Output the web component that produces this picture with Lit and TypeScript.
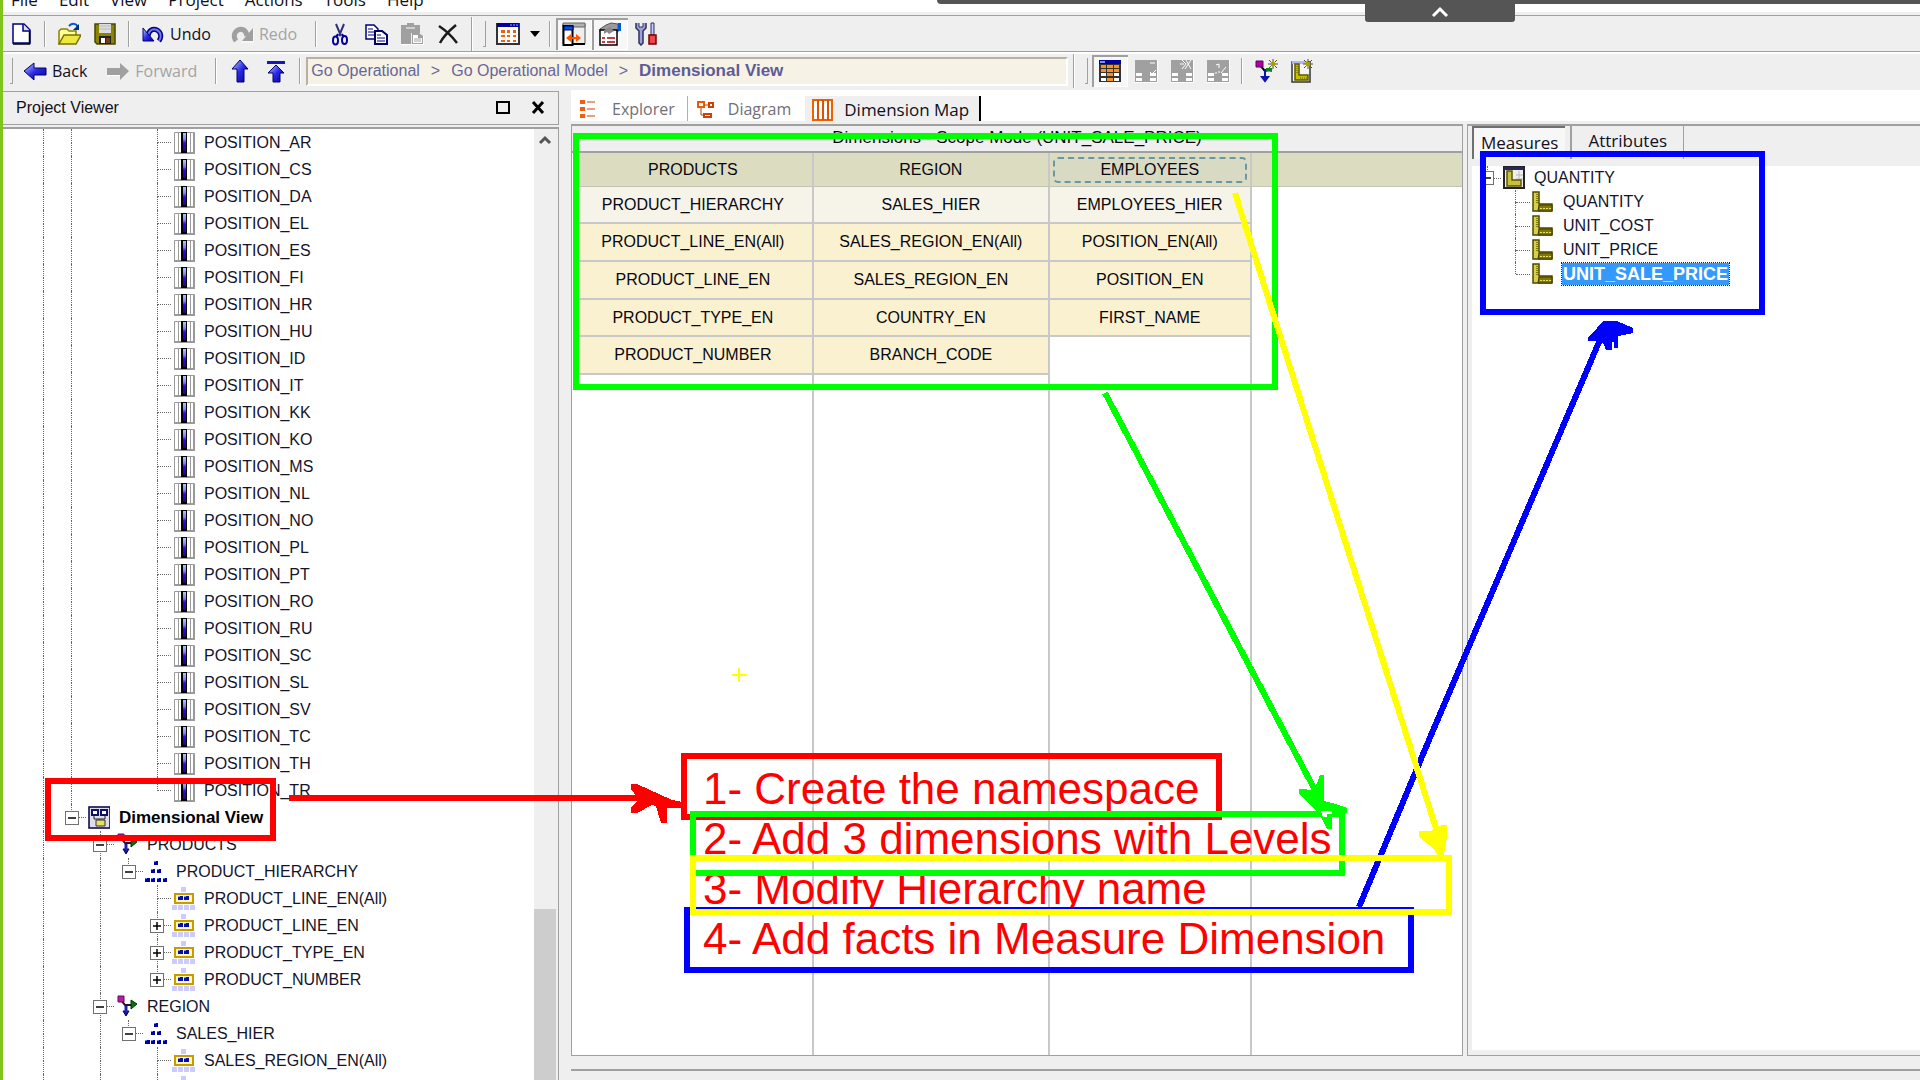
import { LitElement, html, css, svg, nothing } from "lit";
import type { SVGTemplateResult } from "lit";
import { customElement, property } from "lit/decorators.js";

/* ---------- icon set, each drawn on a 24 x 24 grid ---------- */
const grads = svg`<defs>
  <linearGradient id="b" x1="0" y1="0" x2="1" y2="1"><stop offset="0" stop-color="#c8d0ff"/><stop offset=".5" stop-color="#2a2ae8"/><stop offset="1" stop-color="#00008c"/></linearGradient>
  <linearGradient id="c" x1="0" y1="0" x2="0" y2="1"><stop offset="0" stop-color="#a0d0ff"/><stop offset=".35" stop-color="#8080f0"/><stop offset=".55" stop-color="#3300ff"/><stop offset="1" stop-color="#280080"/></linearGradient>
</defs>`;

const spark = (x: number, y: number) => svg`
  <path d="M${x - 5} ${y}h10M${x} ${y - 5}v10M${x - 4} ${y - 4}l8 8M${x + 4} ${y - 4}l-8 8" stroke="#55551a" stroke-width="1"/>
  <rect x=${x - 2} y=${y - 2} width="4" height="4" fill="#a8a000"/>`;

const greyGrid = svg`<path d="M1 1h22v22H1z" fill="#a0a0a0"/><path d="M2 14h6v3H2zM2 19h6v3H2zM16 14h6v3h-6zM16 19h6v3h-6z" fill="#fff"/><path d="M23.500 1v22.500H1" fill="none" stroke="#fff"/>`;

const icons: Record<string, SVGTemplateResult> = {
  fresh: svg`<path d="M4 2h11l6 6v13H4z" fill="#fff" stroke="#000080" stroke-width="1.500"/><path d="M20.500 9v13H4" fill="none" stroke="#000" stroke-width="1.500"/><path d="M14 2v7h7" fill="#dde" stroke="#000080" stroke-width="1.500"/>`,
  open: svg`<path d="M2 22V9l2-2h6l2 2h7v4" fill="#ffff99" stroke="#8a8400" stroke-width="1.500"/><path d="M2 22l5-9h17l-5 9z" fill="#f0e83c" stroke="#77700a" stroke-width="1.500"/><path d="M12 4c3-3 7-3 9 1" fill="none" stroke="#0058d0" stroke-width="2"/><path d="M22 2v6h-6z" fill="#003080"/>`,
  save: svg`<path d="M2 2h20v20H4l-2-2z" fill="#8a8400" stroke="#4a4600" stroke-width="1.500"/><path d="M6 2h12v9H6z" fill="#dcdcdc"/><path d="M6 4h12M6 7h12" stroke="#bbb"/><path d="M6 14h12v8H6z" fill="#222"/><path d="M8 16h4v5H8z" fill="#fff"/><path d="M13 16h4v5h-4z" fill="#70401c"/>`,
  undo: svg`<path d="M7 14c1-6 5-8 9-6 4 2 5 7 2 11" fill="none" stroke="#000080" stroke-width="5"/><path d="M7 14c1-6 5-8 9-6 4 2 5 7 2 11" fill="none" stroke="#7078f0" stroke-width="2"/><path d="M2 6v13h11z" fill="url(#b)" stroke="#000080"/>`,
  redo: svg`<path d="M17 14c-1-6-5-8-9-6-4 2-5 7-2 11" fill="none" stroke="#a0a0a0" stroke-width="5"/><path d="M23 6v13H12z" fill="#a0a0a0"/><path d="M12 20h12V7" fill="none" stroke="#fff"/>`,
  cut: svg`<path d="M8 2l5 12M16 2l-5 12" stroke="#30307c" stroke-width="2"/><path d="M10 12l-2 3M14 12l2 3" stroke="#0000a0" stroke-width="2"/><ellipse cx="7.500" cy="18.500" rx="2.500" ry="4" fill="none" stroke="#0000a0" stroke-width="2"/><ellipse cx="16.500" cy="18" rx="2.500" ry="4" fill="none" stroke="#0000a0" stroke-width="2"/>`,
  copy: svg`<path d="M2 3h8l4 4v10H2z" fill="#fff" stroke="#000080" stroke-width="1.500"/><path d="M4 7h5M4 10h7M4 13h7" stroke="#000080"/><path d="M11 9h7l5 4v9H11z" fill="#fff" stroke="#000060" stroke-width="2"/><path d="M13 13h4M13 16h8M13 19h8" stroke="#000080"/>`,
  paste: svg`<path d="M1 3h6V1h7v2h6v8h-9v11H1z" fill="#a0a0a0"/><path d="M6 6h9" stroke="#fff"/><path d="M12 11h7l4 3v8H12z" fill="#a0a0a0"/><path d="M13 13h5v3h4v5h-9z" fill="#fff"/><path d="M14 17h7M14 19h7" stroke="#a0a0a0"/><path d="M1 22.500h22.500V14" fill="none" stroke="#fff"/>`,
  del: svg`<path d="M3 4c6 4 12 9 18 17M20 3C14 8 8 13 4 21" stroke="#1c1c1c" stroke-width="2.500" fill="none"/>`,
  grid: svg`<path d="M1 2h22v20H1z" fill="#fff" stroke="#333" stroke-width="2"/><path d="M1 1h22v4H1z" fill="#0000a0"/><path d="M14 3h8" stroke="#9aaaff" stroke-dasharray="2 1"/><path d="M5 8h4v3H5zM11 8h3v3h-3zM17 8h3v3h-3zM5 13h4v2H5zM11 13h3v2h-3zM17 13h3v2h-3zM5 18h4v2H5zM11 18h3v2h-3zM17 18h3v2h-3z" fill="#f06010"/>`,
  pane: svg`<path d="M1 2h22v20H1z" fill="#eee" stroke="#555"/><path d="M1 1h22v4H1z" fill="#b0b0b0" stroke="#666"/><path d="M1.500 4v19h9V4z" fill="#fff" stroke="#000" stroke-width="2"/><path d="M2 4h9v4H2z" fill="#0050e0" stroke="#000060"/><path d="M11 22h12" stroke="#000" stroke-width="2"/><path d="M4 16l5-4v3h5v-3l5 4-5 4v-3H9v3z" fill="#f85800"/><path d="M10.500 9v4M10.500 19v4" stroke="#000"/>`,
  props: svg`<path d="M2 10V7l6-4 5-2 7 1v8l-4 1-3-3-5 3z" fill="#9a9a9a" stroke="#555"/><path d="M20 1h3v8h-3z" fill="#0058d8"/><path d="M2 8h17v15H2z" fill="#fff" stroke="#000" stroke-width="1.500"/><path d="M6 8l6-3 4 4-5 3-2-2-3 2z" fill="#888"/><path d="M4 16h3M9 16h8M4 20h3M9 20h8" stroke="#a80000" stroke-width="1.500"/>`,
  tools: svg`<path d="M2 1v5l3 3v12l2 2 2-2V9l3-3V1" fill="#9aa0d8" stroke="#30305c" stroke-width="1.500"/><path d="M5 1v4h4V1" fill="#efefef" stroke="#30305c"/><path d="M17 1h3v12h-3z" fill="#c0c8ff" stroke="#30305c"/><path d="M15 13h7v9h-7z" fill="#f04848" stroke="#780000" stroke-width="1.500"/>`,
  back: svg`<path d="M1 12l10-8v5h12v7H11v5z" fill="url(#b)" stroke="#00006c"/>`,
  forward: svg`<path d="M23 12L14 4v5H1v7h13v5z" fill="#a0a0a0"/><path d="M1 16.500h13" stroke="#fff"/>`,
  up: svg`<path d="M12 1l8 9h-4v13H9V10H4z" fill="url(#b)" stroke="#00006c"/>`,
  top: svg`<path d="M3 2h18v3H3z" fill="#1818b8"/><path d="M12 6l8 8h-4v9H9v-9H4z" fill="url(#b)" stroke="#00006c"/>`,
  map: svg`<path d="M1 1h22v22H1z" fill="#333"/><path d="M1 1h22v4H1z" fill="#0000a0"/><path d="M2 2h5v2H2z" fill="#8090ff"/><path d="M3 6h5v3H3zM9 6h6v3H9zM16 6h5v3h-5zM3 10h5v3H3zM9 10h6v3H9zM16 10h5v3h-5zM9 14h6v3H9zM9 19h6v3H9z" fill="#ff9020"/><path d="M3 14h5v3H3zM16 14h5v3h-5zM3 19h5v3H3zM16 19h5v3h-5z" fill="#fff"/>`,
  g1: svg`${greyGrid}<path d="M16 4h5M16 13l2 2 4-4" stroke="#fff" fill="none"/>`,
  g2: svg`${greyGrid}<path d="M12 1l4 4-4 5M16 1l5 9M21 1l-6 9M10 5h4" stroke="#fff" fill="none"/>`,
  g3: svg`${greyGrid}<path d="M10 6l3-1v4M20 8l-5 6M9 14h2M13 12v2" stroke="#fff" fill="none"/>`,
  newdim: svg`<path d="M5 5l6 7M11 12v8M11 12l7-2" stroke="#000" stroke-width="2"/><path d="M11 10v10M8 18h6l-3 4z" fill="#1010b0" stroke="#1010b0" stroke-width="2"/><path d="M2 2h7v6H2z" fill="#b000a0" stroke="#600060"/><path d="M12 9l6 0v4l-6-1z" fill="#108020"/>${spark(19, 5)}`,
  newmeas: svg`<path d="M2 3h18v20H2z" fill="#f4f4f4" stroke="#333" stroke-width="1.500"/><path d="M2 2h16v3H2z" fill="#b0b8f0"/><path d="M5 5h4v11h9v5H5z" fill="#c8c000" stroke="#5c5800" stroke-width="1.500"/><path d="M10 19h7M7 7v8" stroke="#5c5800" stroke-dasharray="1 1"/>${spark(18, 5)}`,
  col: svg`<path d="M3.500 1.500h20v21h-20z" fill="#fff" stroke="#9a9a9a"/><path d="M7.500 1v21M19.500 1v21M22.500 1v21" stroke="#9a9a9a"/><path d="M3 22h21" stroke="#9a9a9a" stroke-width="2"/><path d="M10 1h6v21h-6z" fill="#000"/><path d="M12 2h3v18h-3z" fill="url(#c)"/>`,
  view: svg`<path d="M3 1h21v21H3z" fill="#dde" stroke="#000040" stroke-width="1.500"/><path d="M6 4h6v5H6zM15 4h6v5h-6z" fill="#fff" stroke="#101060" stroke-width="2"/><path d="M8 10v3h11v-3M13 13v2" fill="none" stroke="#222"/><path d="M10 14h9v6h-9z" fill="#e8e060" stroke="#333"/>`,
  dim: svg`<path d="M6 4l6 7v9M12 10h6" stroke="#201030" stroke-width="2" fill="none"/><path d="M4 1h6v6H4z" fill="#b020a0" stroke="#700060"/><path d="M17 5l6 4-6 5z" fill="#087010" stroke="#003800"/><path d="M9 16h6l-3 5z" fill="#1818b0" stroke="#000070"/><path d="M12 11v6" stroke="#2020b0" stroke-width="3"/>`,
  hier: svg`<path d="M11 1h4v4h-4zM8 9h4v4H8zM14 9h4v4h-4zM2 18h5v4H2zM8 18h4v4H8zM14 18h4v4h-4zM20 18h4v4h-4z" fill="#0000a8"/><path d="M11 1h2v1h-2zM8 9h2v1H8zM14 9h2v1h-2zM2 18h2v1H2zM8 18h2v1H8zM14 18h2v1h-2zM20 18h2v1h-2z" fill="#6080ff"/>`,
  level: svg`<path d="M10 0h5v5h-5zM1 18h5v5H1zM7 18h5v5H7zM13 18h5v5h-5zM19 18h5v5h-5z" fill="#ccccfc"/><path d="M4 7h18v9H4z" fill="#fff8b8" stroke="#c89c00" stroke-width="2"/><path d="M7 9h5v4H7zM13 9h5v4h-5z" fill="#0010a8"/><path d="M7 9h2v1H7zM13 9h2v1h-2z" fill="#80a0ff"/>`,
  mfolder: svg`<path d="M3 1h20v21H3z" fill="#eee" stroke="#222" stroke-width="2"/><path d="M3 1h20v3H3z" fill="#28285c"/><path d="M15 9h7M15 13h7M18 5v12" stroke="#bbb"/><path d="M6 5h5v9h9v6H6z" fill="#c8c040" stroke="#5c5800" stroke-width="1.500"/>`,
  meas: svg`<path d="M3 2h6v12h13v7H3z" fill="#d8d048" stroke="#4c4800" stroke-width="1.500"/><path d="M9 15h13v6H8z" fill="#807800" stroke="#3c3800"/><path d="M10 18.500h11" stroke="#e8e060" stroke-dasharray="2 1"/><path d="M7 4v10" stroke="#807800" stroke-dasharray="1 1" stroke-width="2"/>`,
  explorer: svg`<path d="M3 3h5v4H3zM3 10h5v4H3zM3 17h5v4H3z" fill="#f06010"/><path d="M10 5h8M10 12h8M10 19h8" stroke="#d04000" stroke-width="1"/>`,
  diagram: svg`<path d="M3 5h6v5H3z" fill="#fff" stroke="#f05800" stroke-width="2"/><path d="M14 6h4v4h-4zM9 17h7v3H9z" fill="#fff" stroke="#d04000" stroke-width="2"/><path d="M9 8h5M6 11v7h3" fill="none" stroke="#c04000"/>`,
  dmap: svg`<path d="M2 2h19v20H2z" fill="#fff" stroke="#f06000" stroke-width="2"/><path d="M7 2v20M12 2v20M17 2v20" stroke="#e05000" stroke-width="2"/>`,
  square: svg`<path d="M6 6h12v11H6z" fill="none" stroke="#000" stroke-width="2"/>`,
  close: svg`<path d="M7 6l10 11M17 6L7 17" stroke="#000" stroke-width="3"/>`,
  chevron: svg`<path d="M7 14l5-5 5 5" fill="none" stroke="#555" stroke-width="3"/>`,
  chevronLight: svg`<path d="M5 16l7-7 7 7" fill="none" stroke="#fff" stroke-width="3"/>`,
  caret: svg`<path d="M7 9h10l-5 6z" fill="#000"/>`,
};

const icon = (name: string) => html`<svg class="icon" viewBox="0 0 24 24" width="24" height="24" aria-hidden="true">${grads}${icons[name]}</svg>`;

const iconCss = css`
  .icon { display: block; flex: none; width: 24px; height: 24px; }
`;

/* ---------- tree ---------- */
type Mark = "" | "v" | "t" | "l" | "+" | "-";
interface Row { guides: Mark[]; icon: string; label: string; bold?: boolean; selected?: boolean; ends?: boolean }

@customElement("tree-list")
export class TreeList extends LitElement {
  @property({ attribute: false }) rows: Row[] = [];

  static styles = [iconCss, css`
    :host { display: block; font: 16px/20px "Liberation Sans", Arial, sans-serif; color: #14142c; }
    .tree { list-style: none; margin: 0; padding: 0; }
    .row { display: flex; align-items: center; height: var(--row, 27px); }
    .cell { flex: none; align-self: stretch; width: 29px; display: grid; color: #777; }
    .cell:nth-child(odd) { width: 28px; }
    .cell > * { grid-area: 1 / 1; }
    .up, .down { justify-self: center; width: 0; border-left: 1px dotted #666; }
    .up { height: 50%; align-self: start; }
    .down { height: 50%; align-self: end; }
    .across { width: 50%; height: 0; align-self: center; justify-self: end; border-top: 1px dotted #666; }
    .knob { align-self: center; justify-self: center; box-sizing: border-box; width: 14px; height: 14px; padding: 0; border: 1px solid #707070; background: #fff; display: grid; place-items: center; }
    .knob svg { display: block; }
    .label { margin-left: 8px; white-space: nowrap; padding: 1px; }
    .bold { font-weight: bold; font-size: 17px; color: #000; }
    .selected { background: #3399ff; color: #fff; font-size: 18px; outline: 1px dotted #222; }
  `];

  private cell(m: Mark, below: boolean) {
    const up = m !== "";
    const down = m === "v" || m === "t" || ((m === "+" || m === "-") && below);
    return html`<span class="cell">
      ${up ? html`<span class="up"></span>` : nothing}
      ${down ? html`<span class="down"></span>` : nothing}
      ${up && m !== "v" ? html`<span class="across"></span>` : nothing}
      ${m === "+" || m === "-" ? html`<button class="knob" aria-label=${m === "+" ? "Expand" : "Collapse"}>
        <svg width="10" height="10" viewBox="0 0 10 10"><path d=${m === "+" ? "M1 5h8M5 1v8" : "M1 5h8"} stroke="#000" stroke-width="1.500"/></svg></button>` : nothing}
    </span>`;
  }

  render() {
    return html`<ul class="tree" role="tree">${this.rows.map(r => html`
      <li class="row" role="treeitem" aria-selected=${r.selected ? "true" : "false"}>
        ${r.guides.map(g => this.cell(g, !r.ends))}
        ${icon(r.icon)}
        <span class="label ${r.bold ? "bold" : ""} ${r.selected ? "selected" : ""}">${r.label}</span>
      </li>`)}</ul>`;
  }
}

const langs = "AR CS DA EL ES FI HR HU ID IT KK KO MS NL NO PL PT RO RU SC SL SV TC TH TR".split(" ");
const projectRows: Row[] = [
  ...langs.map((l, i): Row => ({ guides: ["v", "v", "", "", i === langs.length - 1 ? "l" : "t"], icon: "col", label: `POSITION_${l}` })),
  { guides: ["v", "-"], icon: "view", label: "Dimensional View", bold: true, ends: true },
  { guides: ["v", "", "-"], icon: "dim", label: "PRODUCTS" },
  { guides: ["v", "", "v", "-"], icon: "hier", label: "PRODUCT_HIERARCHY", ends: true },
  { guides: ["v", "", "v", "", "t"], icon: "level", label: "PRODUCT_LINE_EN(All)" },
  { guides: ["v", "", "v", "", "+"], icon: "level", label: "PRODUCT_LINE_EN" },
  { guides: ["v", "", "v", "", "+"], icon: "level", label: "PRODUCT_TYPE_EN" },
  { guides: ["v", "", "v", "", "+"], icon: "level", label: "PRODUCT_NUMBER", ends: true },
  { guides: ["v", "", "-"], icon: "dim", label: "REGION" },
  { guides: ["v", "", "v", "-"], icon: "hier", label: "SALES_HIER", ends: true },
  { guides: ["v", "", "v", "", "t"], icon: "level", label: "SALES_REGION_EN(All)" },
  { guides: ["v", "", "v", "", "+"], icon: "level", label: "" },
];
const measureRows: Row[] = [
  { guides: ["-"], icon: "mfolder", label: "QUANTITY", ends: true },
  { guides: ["", "t"], icon: "meas", label: "QUANTITY" },
  { guides: ["", "t"], icon: "meas", label: "UNIT_COST" },
  { guides: ["", "t"], icon: "meas", label: "UNIT_PRICE" },
  { guides: ["", "l"], icon: "meas", label: "UNIT_SALE_PRICE", bold: true, selected: true },
];

/* ---------- toolbars ---------- */
@customElement("tool-bars")
export class ToolBars extends LitElement {
  static styles = [iconCss, css`
    :host { display: block; font: 16px/20px "Open Sans", "Noto Sans", sans-serif; color: #101020; }
    .menu { display: flex; gap: 21px; height: 12px; padding-left: 8px; background: #fff; overflow: hidden; align-items: flex-end; font-size: 17px; }
    .menu a { color: inherit; text-decoration: none; line-height: 24px; }
    .bar { display: flex; align-items: center; height: 36px; background: #efefef; }
    .first { margin-top: 3px; border-top: 1px solid #a0a0a0; border-bottom: 1px solid #a0a0a0; height: 35px; }
    .second { border-top: 2px solid #fff; padding: 0 0 2px 2px; height: 34px; }
    .btn { display: flex; align-items: center; gap: 5px; border: 0; background: none; padding: 0 6px; height: 32px; font: inherit; color: inherit; flex: none; white-space: nowrap; box-sizing: border-box; }
    .wide { padding-right: 13px; }
    .off { color: #a4a4a4; }
    .slim { width: 18px; padding: 0; justify-content: center; overflow: hidden; }
    .down { box-shadow: inset 2px 2px 0 #a0a0a0, inset -1px -1px 0 #fff; background: #f7f7f7; }
    .sep, .handle { flex: none; width: 12px; height: 26px; display: flex; justify-content: center; }
    .sep::before { content: ""; width: 1px; background: #a0a0a0; border-right: 1px solid #fff; }
    .handle::before { content: ""; width: 2px; border-right: 1px solid #a0a0a0; border-bottom: 1px solid #a0a0a0; }
    .tall { height: 34px; }
    .crumbs { display: flex; gap: 11px; align-items: center; flex: 0 1 762px; box-sizing: border-box; height: 29px; padding-left: 3px; overflow: hidden; background: #f7f2e6; border: 2px solid #fff; border-top-color: #b8b0a0; border-left-color: #b8b0a0; font: 16px/20px "Liberation Sans", Arial, sans-serif; color: #66669c; }
    .crumbs a { color: inherit; text-decoration: none; white-space: nowrap; }
    .crumbs b { color: #5c5c98; font-size: 17px; }
  `];

  private btn(name: string, title: string, cls = "", text = "") {
    return html`<button class="btn ${cls}" aria-label=${title} ?disabled=${cls.includes("off")}>${icon(name)}${text ? html`<span>${text}</span>` : nothing}</button>`;
  }

  render() {
    const sep = html`<span class="sep"></span>`;
    const handle = html`<span class="handle"></span>`;
    return html`
      <nav class="menu">${["File", "Edit", "View", "Project", "Actions", "Tools", "Help"].map(m => html`<a href="#">${m}</a>`)}</nav>
      <div class="bar first">
        ${this.btn("fresh", "New")}${sep}${this.btn("open", "Open")}${this.btn("save", "Save")}${sep}
        ${this.btn("undo", "Undo", "wide", "Undo")}${this.btn("redo", "Redo", "wide off", "Redo")}${sep}
        ${this.btn("cut", "Cut")}${this.btn("copy", "Copy")}${this.btn("paste", "Paste", "off")}${this.btn("del", "Delete")}
        <span class="sep tall"></span>${handle}${this.btn("grid", "Views")}${this.btn("caret", "More views", "slim")}${sep}
        ${this.btn("pane", "Panes", "down")}${this.btn("props", "Properties", "down")}${this.btn("tools", "Tools")}
      </div>
      <div class="bar second">
        ${handle}${this.btn("back", "Back", "wide", "Back")}${this.btn("forward", "Forward", "wide off", "Forward")}${sep}
        ${this.btn("up", "Up")}${this.btn("top", "Top")}${sep}
        <div class="crumbs"><a href="#">Go Operational</a><span>&gt;</span><a href="#">Go Operational Model</a><span>&gt;</span><b>Dimensional View</b></div>
        <span class="sep tall"></span>${handle}
        ${this.btn("map", "Dimension map", "down")}${this.btn("g1", "Scope", "off")}${this.btn("g2", "Exclude", "off")}${this.btn("g3", "Unset", "off")}${sep}
        ${this.btn("newdim", "New dimension")}${this.btn("newmeas", "New measure")}
      </div>`;
  }
}

/* ---------- dimension map ---------- */
const dims = ["PRODUCTS", "REGION", "EMPLOYEES"];
const levels: string[][] = [
  ["PRODUCT_HIERARCHY", "SALES_HIER", "EMPLOYEES_HIER"],
  ["PRODUCT_LINE_EN(All)", "SALES_REGION_EN(All)", "POSITION_EN(All)"],
  ["PRODUCT_LINE_EN", "SALES_REGION_EN", "POSITION_EN"],
  ["PRODUCT_TYPE_EN", "COUNTRY_EN", "FIRST_NAME"],
  ["PRODUCT_NUMBER", "BRANCH_CODE", ""],
];

@customElement("dimension-map")
export class DimensionMap extends LitElement {
  static styles = [iconCss, css`
    :host { display: flex; flex-direction: column; min-width: 0; border: 1px solid #a0a0a0; border-width: 2px 1px 1px 1px; background: #fff; font: 16px/20px "Liberation Sans", Arial, sans-serif; color: #080810; box-sizing: border-box; }
    .title { margin: 0; padding: 1px 0 2px; font: 17px/22px "Liberation Sans", Arial, sans-serif; text-align: center; background: #efefef; border-bottom: 2px solid #a0a0a0; flex: none; }
    .map { flex: 1; width: 100%; border-collapse: separate; border-spacing: 0; table-layout: fixed; }
    .frame { flex: 1; display: flex; padding-left: 2px; }
    .c1 { width: 27%; } .c2 { width: 26.600%; } .c3 { width: 22.700%; }
    th, td { box-sizing: border-box; padding: 0; height: 37px; font-weight: normal; text-align: center; border-right: 2px solid #c8c8c8; }
    th { height: 34px; background: #dcdcc0; border-bottom: 1px solid #c4c4b4; }
    th:last-child, td:last-child { border-right: 0; }
    .lv { background: #faf1d0; border-bottom: 2px solid #c8c8c8; height: 38px; }
    tr:nth-child(4) .lv { height: 37px; }
    .hi { background: #f6f3e8; border-bottom: 2px solid #c8c8c8; height: 37px; }
    .picked { display: block; margin: 0 3px; height: 26px; line-height: 22px; border: 2px dashed #6898a8; border-radius: 5px; background: #d8dac4; box-sizing: border-box; }
    .rest td { height: auto; }
  `];
  render() {
    return html`
      <h2 class="title">Dimensions - Scope Mode (UNIT_SALE_PRICE)</h2>
      <div class="frame"><table class="map">
        <colgroup><col class="c1"><col class="c2"><col class="c3"><col></colgroup>
        <thead><tr>${dims.map(d => html`<th scope="col">${d === "EMPLOYEES" ? html`<span class="picked">${d}</span>` : d}</th>`)}<th></th></tr></thead>
        <tbody>
          ${levels.map((r, i) => html`<tr>${r.map(c => html`<td class=${c ? (i ? "lv" : "hi") : ""}>${c}</td>`)}<td></td></tr>`)}
          <tr class="rest"><td></td><td></td><td></td><td></td></tr>
        </tbody>
      </table></div>`;
  }
}

/* ---------- drawn notes over the window ---------- */
@customElement("note-layer")
export class NoteLayer extends LitElement {
  static styles = css`
    :host { position: absolute; left: 0; top: 0; width: 1920px; height: 1080px; pointer-events: none; }
    .steps { position: absolute; left: 703px; top: 764px; margin: 0; padding: 0; list-style: none; color: #f00; font: 44px/50px "Liberation Sans", Arial, sans-serif; white-space: nowrap; }
    .cropped { clip-path: inset(12px 0 0 0); }
    .ink { position: absolute; left: 0; top: 0; }
  `;
  render() {
    return html`
      <ul class="steps">
        <li>1- Create the namespace</li>
        <li>2- Add 3 dimensions with Levels</li>
        <li class="cropped">3- Modify Hierarchy name</li>
        <li>4- Add facts in Measure Dimension</li>
      </ul>
      <svg class="ink" width="1920" height="1080" viewBox="0 0 1920 1080" fill="none" stroke-width="6" shape-rendering="crispEdges">
        <g stroke="#f00">
          <rect x="48" y="781" width="225" height="57"/>
          <path d="M289 798H642"/>
          <rect x="684" y="756" width="535" height="61"/>
        </g>
        <path fill="#f00" d="M631 784h6l35 16 10 2v6h-15v15h-6l-5-17-4-1-15 8h-6v-6l7-7v-2l-7-9z"/>
        <rect x="576" y="136" width="699" height="251" stroke="#0f0"/>
        <g stroke="#00f">
          <rect x="1483" y="154" width="279" height="158"/>
          <rect x="687" y="910" width="724" height="60"/>
          <path d="M1359 907L1429 740L1602 335"/>
        </g>
        <path fill="#00f" d="M1603 321H1617L1633 328V333L1618 336V348H1614V342H1612V350H1606L1604 344L1598 341H1588V337L1597 328z"/>
        <path stroke="#0f0" d="M1105 393L1316 792"/>
        <rect x="693" y="814" width="649" height="59" stroke="#0f0"/>
        <path fill="#0f0" d="M1320 775h4v26l12 3 11 4v5h-15l-11-2 11 6v12h-5l-5-10-6-9-17-16v-5h6l9 2z"/>
        <path fill="#fff" d="M1321 811h11v3h-5v3h-4z"/>
        <path stroke="#ff0" d="M1235 193L1439 838"/>
        <path fill="#ff0" d="M1419 831h12l11-6h5v12l-3 18h-7l-3-6-15-12z"/>
        <rect x="693" y="858" width="756" height="54" stroke="#ff0"/>
        <path stroke="#ff0" stroke-width="2" d="M732 675h15M739 668v14"/>
      </svg>`;
  }
}

/* ---------- application ---------- */
@customElement("app-root")
export class AppRoot extends LitElement {
  static styles = [iconCss, css`
    :host { position: relative; display: flex; flex-direction: column; box-sizing: border-box; height: 100vh; overflow: hidden; background: #efefef; border-left: 3px solid #80c41c; font: 16px/20px "Open Sans", "Noto Sans", sans-serif; color: #101020; }
    .work { flex: 1; min-height: 0; display: flex; gap: 12px; }
    .viewer { flex: 0 0 556px; display: flex; flex-direction: column; min-height: 0; }
    .head { display: flex; align-items: center; gap: 11px; height: 34px; box-sizing: border-box; padding: 0 8px 0 13px; border: 1px solid #a0a0a0; border-left: 0; margin-top: 1px; }
    .name { flex: 1; margin: 0; font: 16px/20px "Liberation Sans", Arial, sans-serif; }
    .tool { border: 0; padding: 0; background: none; }
    .pane { flex: 1; min-height: 0; display: flex; margin-top: 2px; border-top: 2px solid #a0a0a0; border-right: 1px solid #a0a0a0; background: #fff; overflow: hidden; }
    .scrolltree { flex: 1; min-width: 0; overflow: hidden; padding-left: 26px; }
    .scroll { flex: none; width: 22px; padding-right: 2px; background: #efefef; display: flex; flex-direction: column; justify-content: space-between; align-items: center; }
    .thumb { width: 22px; height: 18%; background: #cdcdcd; }
    .side { flex: 1; min-width: 0; display: flex; flex-direction: column; }
    .tabs { display: flex; height: 31px; box-sizing: border-box; background: #fff; align-items: center; padding: 6px 0 0 6px; }
    .tab { display: flex; align-items: center; border: 0; background: none; font: inherit; color: #707078; height: 25px; gap: 11px; padding: 0 12px 0 0; border-right: 1px solid #b0b0b0; }
    .second { padding: 0 14px 0 7px; border-right: 0; gap: 9px; }
    .current { color: #101020; background: #efefef; font-size: 17px; border-right: 2px solid #000; padding: 2px 10px 0 6px; align-self: stretch; height: auto; gap: 9px; }
    .panels { flex: 1; min-height: 0; display: flex; margin-top: 3px; }
    .mapcol { flex: 894; min-width: 0; }
    .measures { flex: 450; min-width: 0; margin-left: 4px; border: 1px solid #a0a0a0; border-top-width: 2px; border-right: 0; display: flex; flex-direction: column; padding: 0 0 5px 4px; }
    .mtabs { display: flex; height: 33px; }
    .mtab { font: 17px/24px "Open Sans", "Noto Sans", sans-serif; color: #101020; border: 0; background: none; padding: 0 16px 3px; border-right: 1px solid #a0a0a0; }
    .on { padding: 0 7px 1px; margin-right: 5px; background: #f7f7f7; border: 0; border-top: 2px solid #707070; border-left: 2px solid #707070; }
    .next { border-left: 2px solid #a0a0a0; }
    .mtree { --row: 24px; flex: 1; background: #fff; margin-top: 7px; padding: 0 0 0 1px; }
    .strip { flex: none; height: 12px; margin-top: 1px; border-bottom: 2px solid #a0a0a0; margin-bottom: 9px; }
    .dock { position: absolute; left: 934px; right: 0; top: 0; height: 4px; background: #555; border-bottom-left-radius: 4px; }
    .pull { position: absolute; left: 428px; top: 0; width: 150px; height: 22px; border: 0; padding: 0; background: #555; border-radius: 0 0 3px 3px; display: grid; place-items: center; }
    .notes { position: absolute; left: -3px; top: 0; }
  `];

  render() {
    return html`
      <tool-bars></tool-bars>
      <div class="work">
        <section class="viewer">
          <header class="head"><h1 class="name">Project Viewer</h1>
            <button class="tool" aria-label="Maximize">${icon("square")}</button>
            <button class="tool" aria-label="Close">${icon("close")}</button>
          </header>
          <div class="pane">
            <tree-list class="scrolltree" .rows=${projectRows}></tree-list>
            <div class="scroll">${icon("chevron")}<span class="thumb"></span></div>
          </div>
        </section>
        <section class="side">
          <nav class="tabs">
            <button class="tab">${icon("explorer")}<span>Explorer</span></button>
            <button class="tab second">${icon("diagram")}<span>Diagram</span></button>
            <button class="tab current">${icon("dmap")}<span>Dimension Map</span></button>
          </nav>
          <div class="panels">
            <dimension-map class="mapcol"></dimension-map>
            <section class="measures">
              <div class="mtabs"><button class="mtab on">Measures</button><button class="mtab next">Attributes</button></div>
              <tree-list class="mtree" .rows=${measureRows}></tree-list>
            </section>
          </div>
          <div class="strip"></div>
        </section>
      </div>
      <div class="dock"><button class="pull" aria-label="Show bar">${icon("chevronLight")}</button></div>
      <note-layer class="notes"></note-layer>`;
  }
}
